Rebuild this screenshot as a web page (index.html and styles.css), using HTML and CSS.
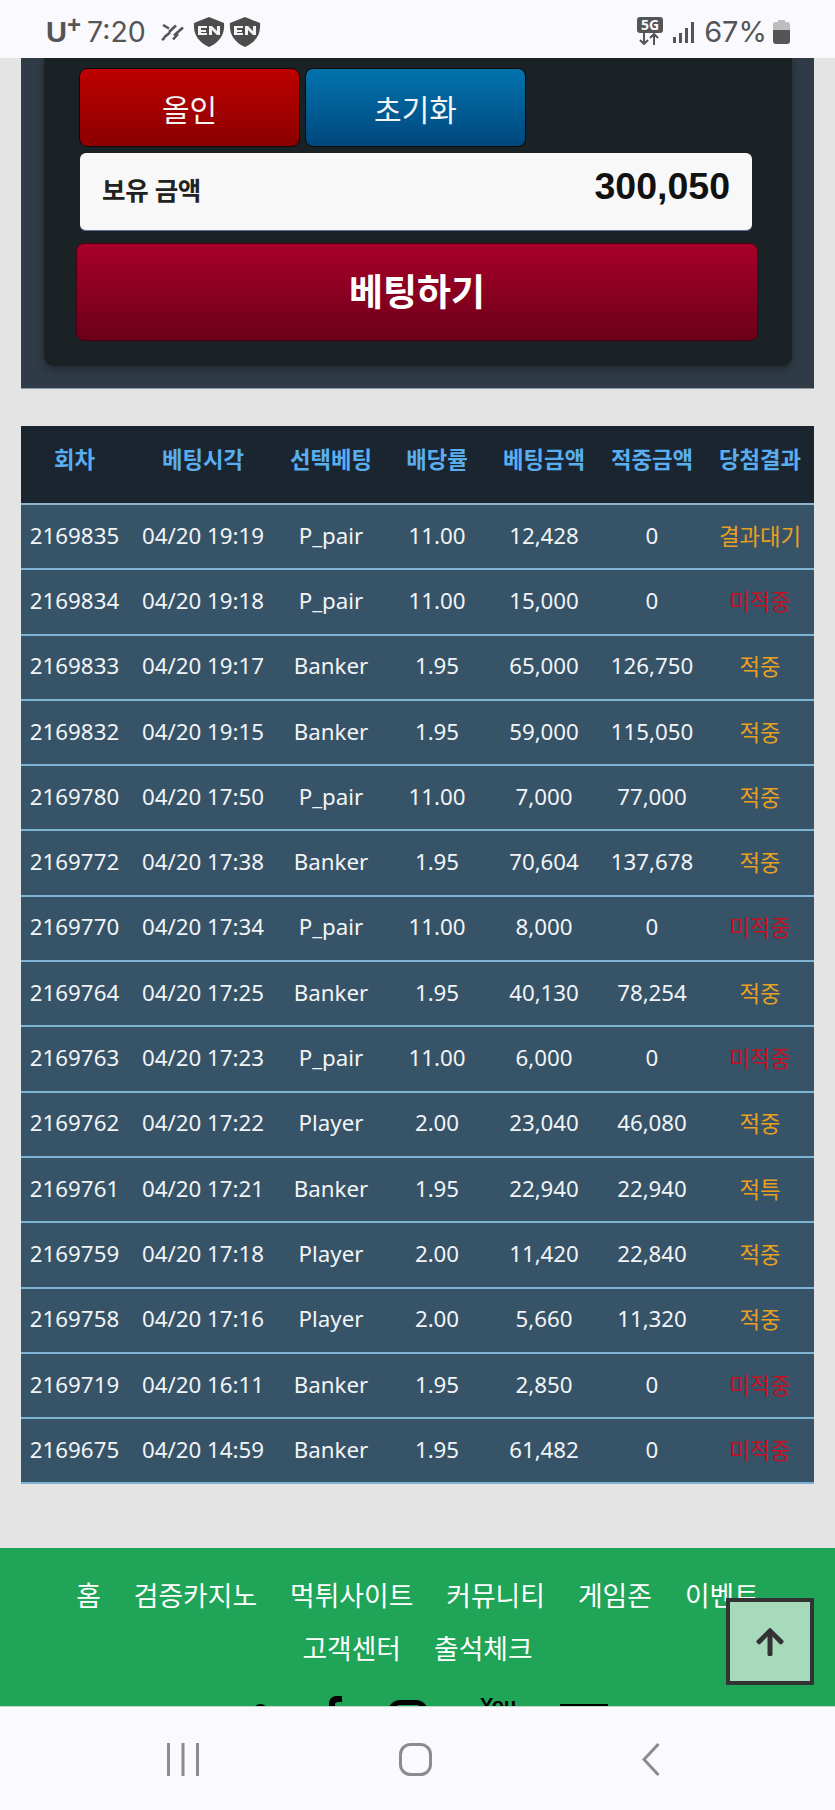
FILE: index.html
```html
<!DOCTYPE html>
<html>
  <head>
    <title>베팅내역</title>
    <link rel="stylesheet" href="styles.css">
  </head>
  <body>
    <div class="screen">
      <!-- Phone status bar -->
      <div class="status">
        <div class="status-left">
          <span class="carrier">U<sup>+</sup></span>
          <span class="clock">7:20</span>
          <svg class="ico-data" viewBox="0 0 23 18"><path d="M2 2l6 3.500M15 2.500l-7 6.500M22 4.500l-9 8M9 9.500l-6 5M17 11l-5 5.500M3.500 15l-2.500 2" stroke="#555" stroke-width="2.600" fill="none"/></svg>
          <svg class="ico-shield" viewBox="0 0 32 30"><path d="M16 0L31 6C32 17 27 25 16 30C5 25 0 17 1 6Z" fill="#4d4d4d"/><path d="M5 9h9v2H8v2h5v2H8v1h6v2H5zM16 9h3l5 5V9h3v9h-3l-5-5v5h-3z" fill="#f3f3f3"/></svg>
          <svg class="ico-shield" viewBox="0 0 32 30"><path d="M16 0L31 6C32 17 27 25 16 30C5 25 0 17 1 6Z" fill="#4d4d4d"/><path d="M5 9h9v2H8v2h5v2H8v1h6v2H5zM16 9h3l5 5V9h3v9h-3l-5-5v5h-3z" fill="#f3f3f3"/></svg>
        </div>
        <div class="status-right">
          <div class="net">
            <span class="net-label">5G</span>
            <svg class="net-arrows" viewBox="0 0 24 12"><path d="M7 0v11M3 7l4 4 4-4M17 12V1M13 5l4-4 4 4" stroke="#555" stroke-width="2" fill="none"/></svg>
          </div>
          <svg class="ico-signal" viewBox="0 0 22 21"><path d="M1 15h3v6H1zM7 11h3v10H7zM13 6h3v15h-3zM19 0h3v21h-3z" fill="#555"/></svg>
          <span class="percent">67%</span>
          <svg class="ico-battery" viewBox="0 0 17 24"><path d="M5 0h7v2h2a3 3 0 0 1 3 3v5H0V5a3 3 0 0 1 3-3h2z" fill="#bdbdbd"/><path d="M0 10h17v11a3 3 0 0 1-3 3H3a3 3 0 0 1-3-3z" fill="#555"/></svg>
        </div>
      </div>

      <div class="page">
        <!-- Betting panel -->
        <div class="panel">
          <div class="panel-inner">
            <div class="quick-btns">
              <button class="btn btn-red">올인</button>
              <button class="btn btn-blue">초기화</button>
            </div>
            <div class="balance">
              <span class="balance-label">보유 금액</span>
              <span class="balance-value">300,050</span>
            </div>
            <button class="btn-bet">베팅하기</button>
          </div>
        </div>

        <!-- History table -->
        <table class="history">
          <colgroup>
            <col class="c-round"><col class="c-time"><col class="c-pick"><col class="c-odds"><col class="c-bet"><col class="c-win"><col class="c-result">
          </colgroup>
          <thead>
            <tr><th>회차</th><th>베팅시각</th><th>선택베팅</th><th>배당률</th><th>베팅금액</th><th>적중금액</th><th>당첨결과</th></tr>
          </thead>
          <tbody>
            <tr><td>2169835</td><td>04/20 19:19</td><td>P_pair</td><td>11.00</td><td>12,428</td><td>0</td><td class="amber">결과대기</td></tr>
            <tr><td>2169834</td><td>04/20 19:18</td><td>P_pair</td><td>11.00</td><td>15,000</td><td>0</td><td class="red">미적중</td></tr>
            <tr><td>2169833</td><td>04/20 19:17</td><td>Banker</td><td>1.95</td><td>65,000</td><td>126,750</td><td class="amber">적중</td></tr>
            <tr><td>2169832</td><td>04/20 19:15</td><td>Banker</td><td>1.95</td><td>59,000</td><td>115,050</td><td class="amber">적중</td></tr>
            <tr><td>2169780</td><td>04/20 17:50</td><td>P_pair</td><td>11.00</td><td>7,000</td><td>77,000</td><td class="amber">적중</td></tr>
            <tr><td>2169772</td><td>04/20 17:38</td><td>Banker</td><td>1.95</td><td>70,604</td><td>137,678</td><td class="amber">적중</td></tr>
            <tr><td>2169770</td><td>04/20 17:34</td><td>P_pair</td><td>11.00</td><td>8,000</td><td>0</td><td class="red">미적중</td></tr>
            <tr><td>2169764</td><td>04/20 17:25</td><td>Banker</td><td>1.95</td><td>40,130</td><td>78,254</td><td class="amber">적중</td></tr>
            <tr><td>2169763</td><td>04/20 17:23</td><td>P_pair</td><td>11.00</td><td>6,000</td><td>0</td><td class="red">미적중</td></tr>
            <tr><td>2169762</td><td>04/20 17:22</td><td>Player</td><td>2.00</td><td>23,040</td><td>46,080</td><td class="amber">적중</td></tr>
            <tr><td>2169761</td><td>04/20 17:21</td><td>Banker</td><td>1.95</td><td>22,940</td><td>22,940</td><td class="amber">적특</td></tr>
            <tr><td>2169759</td><td>04/20 17:18</td><td>Player</td><td>2.00</td><td>11,420</td><td>22,840</td><td class="amber">적중</td></tr>
            <tr><td>2169758</td><td>04/20 17:16</td><td>Player</td><td>2.00</td><td>5,660</td><td>11,320</td><td class="amber">적중</td></tr>
            <tr><td>2169719</td><td>04/20 16:11</td><td>Banker</td><td>1.95</td><td>2,850</td><td>0</td><td class="red">미적중</td></tr>
            <tr><td>2169675</td><td>04/20 14:59</td><td>Banker</td><td>1.95</td><td>61,482</td><td>0</td><td class="red">미적중</td></tr>
          </tbody>
        </table>

        <!-- Footer -->
        <div class="footer">
          <div class="footer-links">
            <a>홈</a><a>검증카지노</a><a>먹튀사이트</a><a>커뮤니티</a><a>게임존</a><a>이벤트</a><a>고객센터</a><a>출석체크</a>
          </div>
          <div class="social">
            <span class="soc-tw"></span>
            <svg class="soc-fb" viewBox="0 0 17 30"><path d="M17 0v6h-4c-2 0-3 1-3 3v4h7l-1 6h-6v11H4V19H0v-6h4V8c0-5 3-8 8-8z" fill="#000"/></svg>
            <span class="soc-ig"></span>
            <span class="soc-yt">You</span>
            <span class="soc-rect"></span>
          </div>
        </div>
      </div>

      <!-- Android nav bar -->
      <div class="navbar">
        <svg class="nav-recent" viewBox="0 0 32 33"><path d="M1.500 0v33M16 0v33M30.500 0v33" stroke="#8c8c8c" stroke-width="3" fill="none"/></svg>
        <svg class="nav-home" viewBox="0 0 33 33"><rect x="1.500" y="1.500" width="30" height="30" rx="10" stroke="#8c8c8c" stroke-width="3" fill="none"/></svg>
        <svg class="nav-back" viewBox="0 0 18 33"><path d="M16.500 1L2 16.500 16.500 32" stroke="#8c8c8c" stroke-width="3" fill="none"/></svg>
      </div>

      <button class="to-top">
        <svg viewBox="0 0 448 512"><path d="M34.9 289.5l-22.2-22.2c-9.4-9.4-9.4-24.6 0-33.9L207 39c9.4-9.4 24.6-9.4 33.9 0l194.3 194.3c9.4 9.4 9.4 24.6 0 33.9L413 289.4c-9.5 9.5-25 9.3-34.3-.4L264 168.6V456c0 13.3-10.7 24-24 24h-32c-13.3 0-24-10.7-24-24V168.6L69.2 289.1c-9.3 9.8-24.8 10-34.3.4z" fill="#333"/></svg>
      </button>
    </div>
  </body>
</html>
```

FILE: styles.css
```css
* {
  box-sizing: border-box;
}

body {
  margin: 0;
  font-family: "Noto Sans", "Noto Sans CJK KR", sans-serif;
  background: #e4e4e4;
}

.screen {
  position: relative;
  width: 835px;
  height: 1810px;
  display: flex;
  flex-direction: column;
  overflow: hidden;
}

/* status bar */
.status {
  height: 58px;
  flex: none;
  background: #f9f9fe;
  display: flex;
  justify-content: space-between;
  padding: 0 45px 0 46px;
  color: #555;
}

.status-left,
.status-right {
  display: flex;
  align-items: flex-start;
}

.carrier {
  font-family: "Liberation Sans", sans-serif;
  font-weight: bold;
  font-size: 29px;
  line-height: 30px;
  margin-top: 17px;
  width: 41px;
  white-space: nowrap;
}

.carrier sup {
  font-size: 24px;
  line-height: 0;
  vertical-align: 9px;
}

.clock {
  font-family: Inter, sans-serif;
  font-size: 28.5px;
  line-height: 32px;
  margin-top: 16px;
  width: 74px;
}

.ico-data {
  width: 23px;
  height: 18px;
  margin-top: 23px;
  margin-right: 9px;
}

.ico-shield {
  width: 32px;
  height: 30px;
  margin-top: 17px;
  margin-right: 4px;
}

.net {
  width: 26px;
  margin-top: 17px;
  margin-right: 9px;
}

.net-label {
  display: block;
  height: 16px;
  background: #555;
  color: #f9f9fe;
  border-radius: 3px;
  font-size: 14px;
  font-weight: bold;
  line-height: 16px;
  text-align: center;
}

.net-arrows {
  display: block;
  width: 24px;
  height: 12px;
  margin-top: 0;
}

.ico-signal {
  width: 22px;
  height: 21px;
  margin-top: 22px;
  margin-right: 10px;
}

.percent {
  font-family: Inter, sans-serif;
  font-size: 29px;
  line-height: 32px;
  margin-top: 16px;
  margin-right: 6px;
}

.ico-battery {
  width: 17px;
  height: 24px;
  margin-top: 20px;
}

/* page */
.page {
  flex: 1;
  min-height: 0;
  overflow: hidden;
  display: flex;
  flex-direction: column;
  background: #e4e4e4;
}

.panel {
  margin: 0 21px;
  padding: 0 22px 22px 23px;
  background: #2f3b46;
  border-bottom: 1px solid #8a99a6;
  flex: none;
}

.panel-inner {
  background: #1b2226;
  border-radius: 0 0 10px 10px;
  box-shadow: 0 3px 8px rgba(0, 0, 0, 0.35);
  padding: 10px 40px 25px 35px;
}

.quick-btns {
  display: flex;
  gap: 5px;
}

.btn {
  width: 221px;
  height: 79px;
  border: 1px solid #0a0a0a;
  border-radius: 8px;
  color: #f4f4f4;
  font-family: inherit;
  font-size: 30px;
  padding: 0;
}

.btn-red {
  background: linear-gradient(#bd0000, #8c0000);
}

.btn-blue {
  background: linear-gradient(#0273ad, #00477e);
}

.balance {
  height: 78px;
  margin: 6px 0 0 1px;
  padding: 0 22px;
  background: #f8f8f8;
  border-radius: 6px;
  border-bottom: 1px solid #5a6f9a;
  display: flex;
  justify-content: space-between;
  align-items: center;
}

.balance-label {
  font-size: 25.5px;
  font-weight: bold;
  letter-spacing: -0.3px;
  color: #222;
  margin-top: -7px;
}

.balance-value {
  font-family: "Liberation Sans", sans-serif;
  font-size: 37.5px;
  font-weight: bold;
  color: #111;
  margin-top: -10px;
}

.btn-bet {
  display: block;
  width: 682px;
  height: 98px;
  margin: 12px 0 0 -3px;
  padding: 0 0 4px;
  border: 1px solid #4a0010;
  border-radius: 8px;
  background: linear-gradient(#a9002a, #6b0018);
  color: #fff;
  font-family: inherit;
  font-size: 37px;
  font-weight: bold;
}

/* history table */
.history {
  width: 793px;
  margin: 37px 21px 0;
  flex: none;
  table-layout: fixed;
  border-collapse: separate;
  border-spacing: 0;
  font-size: 22.3px;
  text-align: center;
}

.c-round { width: 107px; }
.c-time { width: 150px; }
.c-pick { width: 106px; }
.c-odds { width: 106px; }
.c-bet { width: 108px; }
.c-win { width: 108px; }
.c-result { width: 108px; }

.history th {
  height: 79px;
  padding: 0 0 12px;
  background: #1a2530;
  color: #5aaef0;
  font-size: 22.3px;
  font-weight: bold;
  border-bottom: 2px solid #8fb4cc;
}

.history td {
  height: 65.3px;
  padding: 0 0 3px;
  background: #365368;
  color: #f2f4f6;
  border-bottom: 2px solid #7db3d3;
  white-space: nowrap;
}

.history td.amber {
  color: #e9a020;
}

.history td.red {
  color: #c4101f;
}

/* footer */
.footer {
  margin-top: 64px;
  flex: none;
  background: #20a558;
  padding-top: 21px;
  color: #fff;
}

.footer-links {
  display: flex;
  flex-wrap: wrap;
  justify-content: center;
  column-gap: 33px;
  padding: 0 60px;
  font-size: 26.8px;
  line-height: 53px;
}

.social {
  display: flex;
  align-items: flex-start;
  height: 50px;
  margin-top: 21px;
  padding-left: 253px;
}

.soc-tw {
  width: 15px;
  height: 20px;
  margin-top: 8px;
  background: #000;
  border-radius: 8px;
}

.soc-fb {
  width: 17px;
  height: 30px;
  margin-left: 57px;
}

.soc-ig {
  width: 40px;
  height: 40px;
  margin-left: 46px;
  margin-top: 4px;
  border: 5px solid #000;
  border-radius: 12px;
}

.soc-yt {
  width: 28px;
  margin-left: 52px;
  margin-top: -3px;
  color: #000;
  font-family: "Liberation Sans", sans-serif;
  font-size: 20px;
  font-weight: bold;
  line-height: 24px;
}

.soc-rect {
  width: 48px;
  height: 30px;
  margin-left: 52px;
  margin-top: 8px;
  background: #000;
}

/* android nav */
.navbar {
  height: 104px;
  flex: none;
  background: #f9f9fe;
  border-top: 1px solid #b9dcc6;
  display: flex;
  align-items: flex-start;
  padding: 36px 0 0 167px;
}

.nav-recent {
  width: 32px;
  height: 33px;
}

.nav-home {
  width: 33px;
  height: 33px;
  margin-left: 200px;
}

.nav-back {
  width: 18px;
  height: 33px;
  margin-left: 210px;
}

/* scroll to top button, sits over the footer */
.to-top {
  position: absolute;
  right: 21px;
  bottom: 125px;
  width: 88px;
  height: 87px;
  padding: 0;
  background: #a6dabb;
  border: 4px solid #333;
  display: flex;
  align-items: center;
  justify-content: center;
}

.to-top svg {
  width: 28px;
  height: 32px;
}
```
